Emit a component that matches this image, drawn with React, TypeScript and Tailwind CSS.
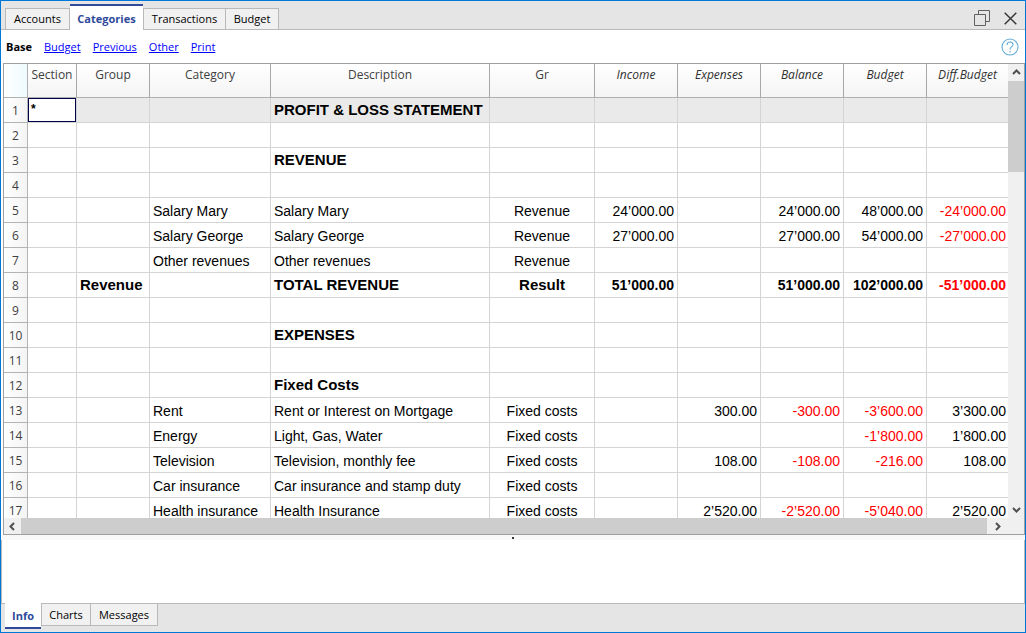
import { useState } from "react";
import clsx from "clsx";

type Row = {
  section?: string;
  group?: string;
  category?: string;
  description?: string;
  gr?: string;
  amounts?: [string, string, string, string, string];
  bold?: boolean;
};

const columns = [
  { name: "Section", width: "w-[49px]" },
  { name: "Group", width: "w-[73px]" },
  { name: "Category", width: "w-[121px]" },
  { name: "Description", width: "w-[219px]" },
  { name: "Gr", width: "w-[105px]" },
  { name: "Income", width: "w-[83px]", amount: true },
  { name: "Expenses", width: "w-[83px]", amount: true },
  { name: "Balance", width: "w-[83px]", amount: true },
  { name: "Budget", width: "w-[83px]", amount: true },
  { name: "Diff.Budget", width: "", amount: true },
];

const rows: Row[] = [
  { section: "*", description: "PROFIT & LOSS STATEMENT", bold: true },
  {},
  { description: "REVENUE", bold: true },
  {},
  { category: "Salary Mary", description: "Salary Mary", gr: "Revenue", amounts: ["24’000.00", "", "24’000.00", "48’000.00", "-24’000.00"] },
  { category: "Salary George", description: "Salary George", gr: "Revenue", amounts: ["27’000.00", "", "27’000.00", "54’000.00", "-27’000.00"] },
  { category: "Other revenues", description: "Other revenues", gr: "Revenue" },
  { group: "Revenue", description: "TOTAL REVENUE", gr: "Result", amounts: ["51’000.00", "", "51’000.00", "102’000.00", "-51’000.00"], bold: true },
  {},
  { description: "EXPENSES", bold: true },
  {},
  { description: "Fixed Costs", bold: true },
  { category: "Rent", description: "Rent or Interest on Mortgage", gr: "Fixed costs", amounts: ["", "300.00", "-300.00", "-3’600.00", "3’300.00"] },
  { category: "Energy", description: "Light, Gas, Water", gr: "Fixed costs", amounts: ["", "", "", "-1’800.00", "1’800.00"] },
  { category: "Television", description: "Television, monthly fee", gr: "Fixed costs", amounts: ["", "108.00", "-108.00", "-216.00", "108.00"] },
  { category: "Car insurance", description: "Car insurance and stamp duty", gr: "Fixed costs" },
  { category: "Health insurance", description: "Health Insurance", gr: "Fixed costs", amounts: ["", "2’520.00", "-2’520.00", "-5’040.00", "2’520.00"] },
];

const topTabs = [
  { name: "Accounts", width: "w-[65px]" },
  { name: "Categories", width: "w-[73px]" },
  { name: "Transactions", width: "w-[82px]" },
  { name: "Budget", width: "w-[54px]" },
];

const bottomTabs = [
  { name: "Info", width: "w-9" },
  { name: "Charts", width: "w-[50px]" },
  { name: "Messages", width: "w-[67px]" },
];

const views = ["Budget", "Previous", "Other", "Print"];

function Chevron({ d, label, className }: { d: string; label: string; className: string }) {
  return (
    <button type="button" aria-label={label} className={clsx("flex shrink-0 items-center justify-center", className)}>
      <svg width="9" height="9" viewBox="0 0 9 9" fill="none" stroke="#505050" strokeWidth="2">
        <path d={d} />
      </svg>
    </button>
  );
}

function WindowButtons() {
  return (
    <div className="flex items-center gap-3.5 pt-1.5 pr-2">
      <button type="button" aria-label="Restore">
        <svg width="16" height="16" viewBox="0 0 16 16" fill="none" stroke="#606060" strokeWidth="1">
          <path d="M0.5 4.5H11.5V15.5H0.5ZM4.5 4.5V0.5H15.5V11.5H11.5" />
        </svg>
      </button>
      <button type="button" aria-label="Close">
        <svg width="13" height="13" viewBox="0 0 13 13" fill="none" stroke="#333" strokeWidth="1.4">
          <path d="M0.7 0.7L12.3 12.3M12.3 0.7L0.7 12.3" />
        </svg>
      </button>
    </div>
  );
}

function Sheet() {
  return (
    <table className="w-full table-fixed border-separate border-spacing-0 font-['Liberation_Sans',sans-serif] text-black">
      <thead>
        <tr className="h-[34px] bg-linear-to-b from-white to-[#f4f4f4] font-['Open_Sans',sans-serif] text-xs leading-5 text-[#404040]">
          <th aria-label="Row" className="w-6 border-r border-b border-[#b0b0b0] bg-linear-to-r from-white to-[#eefbfe]" />
          {columns.map((column) => (
            <th
              key={column.name}
              scope="col"
              className={clsx(
                "border-b border-b-[#b0b0b0] border-r-[#a8a8a8] px-0 pt-px align-top font-normal whitespace-nowrap not-last:border-r",
                column.width,
                column.amount && "italic text-[#303030]",
              )}
            >
              {column.name}
            </th>
          ))}
        </tr>
      </thead>
      <tbody>
        {rows.map((row, index) => {
          const cell = clsx(
            "h-[25px] border-b border-[#d4d4d4] whitespace-nowrap not-last:border-r",
            index === 0 && "bg-[#eaeaea]",
            row.bold ? "py-0 text-[15px] leading-6 font-bold" : "pt-0.5 pb-0 text-sm leading-[22px]",
          );
          return (
            <tr key={index}>
              <th
                scope="row"
                className="h-[25px] border-r border-b border-[#b4b4b4] bg-linear-to-r from-white to-[#f4f4f4] px-0 pt-0.5 pb-0 text-center font-['Open_Sans',sans-serif] text-xs leading-[22px] font-normal text-[#404040]"
              >
                {index + 1}
              </th>
              <td className={clsx(cell, "px-0")}>
                {row.section && (
                  <div className="h-6 border border-[#000048] bg-white pl-0.5 text-xs leading-5">{row.section}</div>
                )}
              </td>
              <td className={clsx(cell, "pl-[3px]")}>{row.group}</td>
              <td className={clsx(cell, "pl-[3px]")}>{row.category}</td>
              <td className={clsx(cell, "pl-[3px]")}>{row.description}</td>
              <td className={clsx(cell, "text-center")}>{row.gr}</td>
              {(row.amounts ?? ["", "", "", "", ""]).map((amount, i) => (
                <td key={i} className={clsx(cell, "pr-[3px] pl-0 text-right last:pr-0.5", amount.startsWith("-") && "text-[#f00]")}>
                  <span className="text-sm leading-none">{amount}</span>
                </td>
              ))}
            </tr>
          );
        })}
      </tbody>
    </table>
  );
}

export default function App() {
  const [top, setTop] = useState("Categories");
  const [bottom, setBottom] = useState("Info");

  return (
    <div className="flex h-screen flex-col overflow-hidden border border-[#0078d7] bg-white font-['Open_Sans',sans-serif] text-[11px] leading-4 text-black">
      <header className="flex h-[29px] shrink-0 items-stretch justify-between border-b border-[#b9b9b9] bg-[#e5e5e5]">
        <nav className="flex items-end pl-1" aria-label="Tables">
          {topTabs.map((tab) => (
            <button
              key={tab.name}
              type="button"
              onClick={() => setTop(tab.name)}
              className={clsx(
                "text-center whitespace-nowrap",
                tab.width,
                tab.name === top
                  ? "-mb-px h-[26px] border-t-2 border-[#2f4a9a] bg-white pt-0.5 font-bold text-[#2f4a9a]"
                  : "h-[21px] border-t border-l border-[#b9b9b9] bg-[#f1f1f1] first:border-r last:border-r",
              )}
            >
              {tab.name}
            </button>
          ))}
        </nav>
        <WindowButtons />
      </header>

      <div className="flex h-[33px] shrink-0 items-center justify-between pr-1.5 pl-[5px]">
        <nav className="flex gap-3" aria-label="Views">
          <strong>Base</strong>
          {views.map((view) => (
            <a key={view} href={"#" + view.toLowerCase()} className="text-[#0000ff] underline">
              {view}
            </a>
          ))}
        </nav>
        <button type="button" aria-label="Help">
          <svg width="18" height="18" viewBox="0 0 18 18" fill="none" stroke="#62acd8" strokeWidth="1.1">
            <circle cx="9" cy="9" r="8" />
            <path d="M6 7C6 5 7.2 4 9 4S12 5 12 6.6C12 8.8 9 9 9 11.4M9 13V14.4" />
          </svg>
        </button>
      </div>

      <main className="ml-0.5 flex min-h-0 flex-1 flex-col border border-[#a0a0a0]">
        <div className="flex min-h-0 flex-1">
          <div className="min-w-0 flex-1 overflow-hidden">
            <Sheet />
          </div>
          <div className="flex w-4 shrink-0 flex-col bg-[#f0f0f0]">
            <Chevron d="M1 6L4.5 2.5L8 6" label="Scroll up" className="h-[17px]" />
            <div className="h-[91px] bg-[#cdcdcd]" />
            <div className="flex-1" />
            <Chevron d="M1 3L4.5 6.5L8 3" label="Scroll down" className="h-[17px]" />
          </div>
        </div>
        <div className="flex h-4 shrink-0 bg-[#f0f0f0]">
          <Chevron d="M6 1L2.5 4.5L6 8" label="Scroll left" className="w-[17px]" />
          <div className="flex-1 bg-[#cdcdcd]" />
          <Chevron d="M3 1L6.5 4.5L3 8" label="Scroll right" className="mr-4 w-[21px]" />
        </div>
      </main>

      <div className="flex h-[5px] shrink-0 justify-center bg-[#f8f8f8] pt-0.5">
        <div className="h-0.5 w-0.5 bg-[#333]" />
      </div>

      <section aria-label={bottom} className="h-16 shrink-0 border-x border-b border-[#b9b9b9]" />

      <footer className="flex h-7 shrink-0 bg-[#e5e5e5] pl-1">
        <nav className="flex items-start" aria-label="Panels">
          {bottomTabs.map((tab) => (
            <button
              key={tab.name}
              type="button"
              onClick={() => setBottom(tab.name)}
              className={clsx(
                "text-center whitespace-nowrap",
                tab.width,
                tab.name === bottom
                  ? "-mt-px h-[26px] border-b-2 border-[#2f4a9a] bg-white pt-0.5 font-bold text-[#2f4a9a]"
                  : "h-[22px] border border-t-0 border-[#b9b9b9] bg-[#f1f1f1] pt-px last:border-l-0",
              )}
            >
              {tab.name}
            </button>
          ))}
        </nav>
      </footer>
    </div>
  );
}
